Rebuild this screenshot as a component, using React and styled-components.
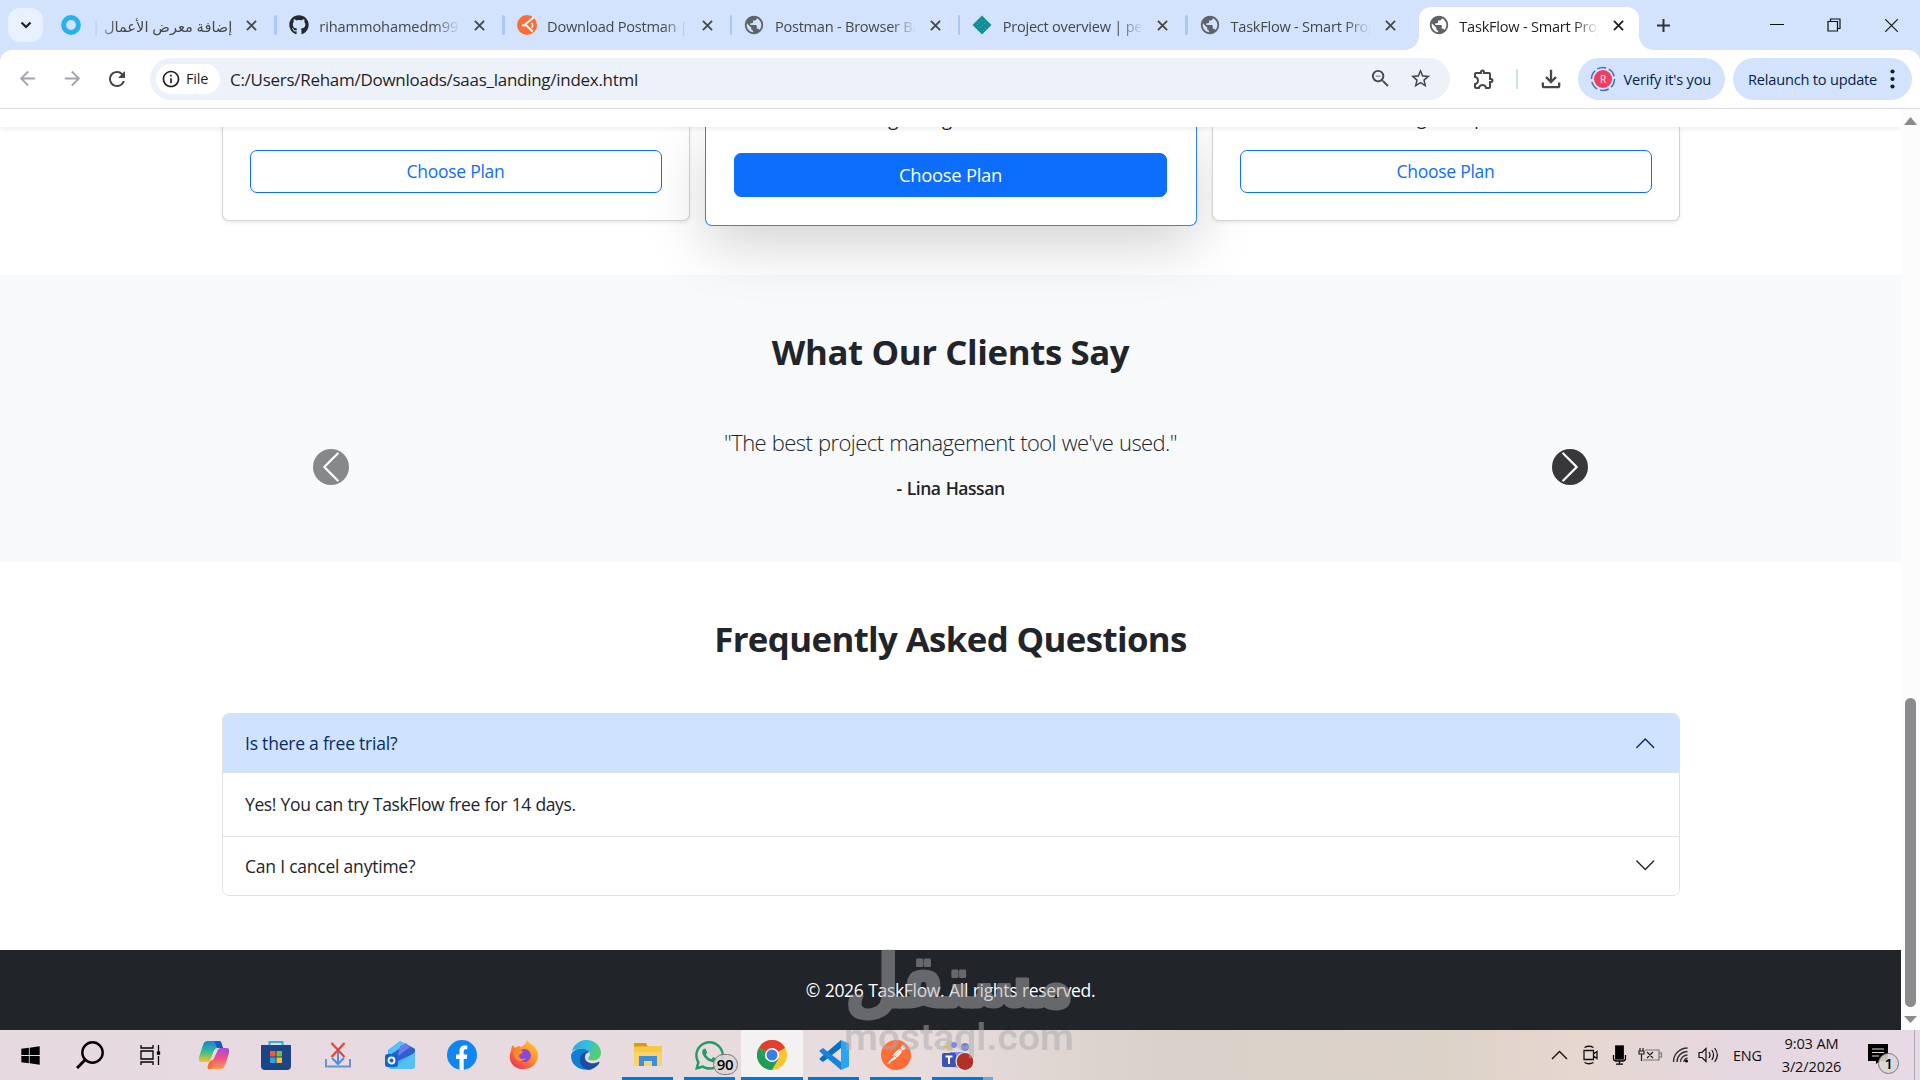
import styled, { createGlobalStyle, css } from "styled-components";
import { FaGithub, FaWindows, FaWhatsapp } from "react-icons/fa";
import { SiPostman } from "react-icons/si";
import {
  MdArrowBack,
  MdArrowForward,
  MdInfoOutline,
  MdOutlineExtension,
  MdOutlineFileDownload,
  MdPublic,
  MdRefresh,
  MdStarOutline,
  MdZoomOut,
} from "react-icons/md";

const GlobalStyle = createGlobalStyle`
  * {
    box-sizing: border-box;
  }

  body {
    margin: 0;
    overflow: hidden;
    font-family: "Open Sans", "Noto Sans", "DejaVu Sans", sans-serif;
    color: #212529;
  }

  svg {
    display: block;
    flex-shrink: 0;
  }

  h2, p {
    margin: 0;
  }
`;

const Screen = styled.div`
  position: relative;
  width: 1920px;
  height: 1080px;
  display: flex;
  flex-direction: column;
  overflow: hidden;
  background-color: #fff;
`;

/* ---------- tab strip ---------- */

const TabStrip = styled.div`
  height: 50px;
  display: flex;
  align-items: center;
  padding-left: 8px;
  background-color: #d3e3fd;
`;

const TabSearch = styled.button`
  width: 35px;
  height: 34px;
  margin-right: 5px;
  display: flex;
  align-items: center;
  justify-content: center;
  padding: 0;
  border: none;
  border-radius: 12px;
  background-color: #e9f1fe;
`;

const TabItem = styled.div`
  position: relative;
  width: 227.8px;
  height: 43px;
  margin-top: 7px;
  padding: 0 18.5px 7px 13px;
  display: flex;
  align-items: center;
  border-radius: 12px 12px 0 0;
  color: #474747;

  ${(props) =>
    props.$active &&
    css`
      width: 220px;
      margin-left: 4px;
      padding-left: 10px;
      padding-right: 14.5px;
      background-color: #fff;
      color: #1f1f1f;

      &::before,
      &::after {
        content: "";
        position: absolute;
        bottom: 0;
        width: 14px;
        height: 14px;
      }
      &::before {
        left: -14px;
        background: radial-gradient(circle at 0 0, transparent 13.5px, #fff 14px);
      }
      &::after {
        right: -14px;
        background: radial-gradient(
          circle at 100% 0,
          transparent 13.5px,
          #fff 14px
        );
      }
    `}
`;

const TabFavicon = styled.span`
  width: 20px;
  height: 20px;
  display: flex;
  align-items: center;
  justify-content: center;
  color: #5f6368;
`;

const TabTitle = styled.span`
  flex: 1;
  margin: 0 14px 0 10.5px;
  padding-top: 1.5px;
  overflow: hidden;
  white-space: nowrap;
  font-size: 14.6px;
  letter-spacing: ${(props) => props.$track || "-0.25px"};
  line-height: 24px;
  direction: ${(props) => (props.$rtl ? "rtl" : "ltr")};
  mask-image: linear-gradient(
    to ${(props) => (props.$rtl ? "left" : "right")},
    #000 82%,
    transparent
  );
`;

const TabDivider = styled.span`
  position: absolute;
  right: -1px;
  top: 8px;
  width: 2.5px;
  height: 20px;
  border-radius: 2px;
  background-color: #a8c7fa;
`;

const NewTab = styled.span`
  margin: 0 auto 0 18px;
`;

const WindowButtons = styled.div`
  display: flex;
  gap: 43px;
  padding-right: 21px;
`;

/* ---------- toolbar ---------- */

const ToolbarBack = styled.div`
  height: 59px;
  background-color: #d3e3fd;
`;

const Toolbar = styled.div`
  height: 59px;
  display: flex;
  align-items: center;
  padding: 0 8px 1px 16px;
  border-bottom: 1px solid #dadce0;
  border-radius: 12px 12px 0 0;
  background-color: #fff;
  color: #474747;
`;

const NavIcons = styled.div`
  width: 134px;
  display: flex;
  gap: 21.5px;

  svg:nth-child(-n + 2) {
    color: #a3a6ad;
  }
`;

const AddressBar = styled.div`
  width: 1300px;
  height: 42px;
  display: flex;
  align-items: center;
  padding: 0 18px 0 6px;
  border-radius: 21px;
  background-color: #edf2fa;
`;

const FileChip = styled.div`
  width: 64px;
  height: 30px;
  display: flex;
  align-items: center;
  gap: 5px;
  padding-left: 5px;
  border-radius: 15px;
  background-color: #fff;
  font-size: 14.5px;
  font-weight: 500;
  letter-spacing: -0.2px;
  color: #1f1f1f;
`;

const Url = styled.span`
  flex: 1;
  margin-left: 10px;
  padding-top: 1px;
  font-size: 17px;
  letter-spacing: -0.277px;
  color: #1f1f1f;
`;

const AddressActions = styled.div`
  display: flex;
  gap: 17px;
`;

const ToolbarActions = styled.div`
  flex: 1;
  display: flex;
  align-items: center;
  justify-content: space-between;
  padding: 0 13.5px 0 22px;
`;

const ToolbarDivider = styled.span`
  width: 2px;
  height: 20px;
  margin-left: 2px;
  background-color: #c9ddfc;
`;

const Chip = styled.div`
  width: ${(props) => props.$width}px;
  height: 42px;
  display: flex;
  align-items: center;
  justify-content: space-between;
  padding: 0 ${(props) => props.$padRight}px 0 ${(props) => props.$padLeft}px;
  margin-left: ${(props) => props.$gap || 0}px;
  border-radius: 21px;
  background-color: #d3e3fd;
  font-size: 14.6px;
  letter-spacing: -0.2px;
  white-space: nowrap;
  color: #041e49;
`;

/* ---------- page ---------- */

const BrowserView = styled.div`
  height: 921px;
  display: flex;
`;

const Page = styled.div`
  width: 1901px;
  height: 921px;
  overflow: hidden;
`;

const SiteNav = styled.div`
  position: relative;
  z-index: 3;
  height: 18px;
  background-color: #fff;
  box-shadow: 0 2px 4.5px rgba(0, 0, 0, 0.075);
`;

const Pricing = styled.section`
  position: relative;
  z-index: 2;
  height: 148px;
  display: flex;
  align-items: flex-start;
  justify-content: center;
  gap: 15px;
`;

const PlanCard = styled.div`
  position: relative;
  width: ${(props) => (props.$featured ? 492 : 468)}px;
  height: ${(props) => (props.$featured ? 99 : 94)}px;
  padding: 0 ${(props) => (props.$featured ? 28.5 : 27)}px;
  border: 1px solid
    ${(props) => (props.$featured ? "#2f81f7" : "rgba(0, 0, 0, 0.175)")};
  border-top: none;
  border-radius: 0 0 7px 7px;
  background-color: #fff;
  box-shadow: ${(props) =>
    props.$featured
      ? "0 19px 57px rgba(0, 0, 0, 0.175)"
      : "0 2px 4.5px rgba(0, 0, 0, 0.075)"};
  text-align: center;
  font-size: ${(props) => (props.$featured ? 18.4 : 17.5)}px;
  letter-spacing: -0.26px;
`;

const PlanFeature = styled.p`
  margin: -22px 0 ${(props) => (props.$featured ? 19.5 : 18)}px;
  line-height: ${(props) => (props.$featured ? 28.3 : 27)}px;
`;

const PlanButton = styled.button`
  width: 100%;
  height: ${(props) => (props.$featured ? 44.5 : 43)}px;
  padding: 0 0 1px;
  border: 1px solid #0d6efd;
  border-radius: 7px;
  background-color: ${(props) => (props.$featured ? "#0d6efd" : "transparent")};
  color: ${(props) => (props.$featured ? "#fff" : "#0d6efd")};
  font: inherit;
  letter-spacing: inherit;
`;

const SectionTitle = styled.h2`
  font-size: 34.8px;
  font-weight: 700;
  line-height: 43px;
  letter-spacing: ${(props) => props.$track};
  text-align: center;
`;

const Testimonials = styled.section`
  height: 287px;
  padding-top: 55px;
  background-color: #f8f9fa;
`;

const Carousel = styled.div`
  margin: 51px auto 0;
  width: 1275px;
  height: 85px;
  display: flex;
  align-items: center;
  justify-content: space-between;
`;

const CarouselArrow = styled.span`
  width: 36px;
  height: 36px;
  border-radius: 50%;
  background-color: ${(props) => (props.$dim ? "#878889" : "#38383c")};
  color: #fff;
`;

const Quote = styled.div`
  align-self: flex-start;
  padding-top: 1px;
  text-align: center;
`;

const QuoteText = styled.p`
  font-size: 22px;
  font-weight: 300;
  line-height: 34px;
  letter-spacing: -0.58px;
  word-spacing: 0.6px;
`;

const QuoteAuthor = styled.p`
  margin-top: 18px;
  font-size: 17.5px;
  font-weight: 600;
  line-height: 22px;
  letter-spacing: -0.45px;
  word-spacing: 1px;
`;

const Faq = styled.section`
  height: 388px;
  padding-top: 55px;
`;

const Accordion = styled.div`
  width: 1458px;
  margin: 53px auto 0;
  border: 1px solid #dee2e6;
  border-radius: 7px;
  overflow: hidden;
  font-size: 17.5px;
`;

const AccordionHeader = styled.div`
  height: ${(props) => (props.$open ? 59 : 58)}px;
  display: flex;
  align-items: center;
  justify-content: space-between;
  padding: 0 22px ${(props) => (props.$open ? 0 : 1)}px 22.5px;
  border-bottom: ${(props) => (props.$open ? "1px solid #dee2e6" : "none")};
  background-color: ${(props) => (props.$open ? "#cfe2ff" : "#fff")};
  color: ${(props) => (props.$open ? "#052c65" : "#212529")};
  letter-spacing: -0.22px;

  svg {
    transform: ${(props) => (props.$open ? "rotate(180deg)" : "none")};
  }
`;

const AccordionBody = styled.div`
  height: 64px;
  padding: 18px 22.5px;
  line-height: 27px;
  border-bottom: 1px solid #dee2e6;
  letter-spacing: -0.4px;
  word-spacing: 0.5px;
`;

const Footer = styled.footer`
  height: 80px;
  padding-top: 27px;
  background-color: #212529;
  color: #fff;
  text-align: center;
  font-size: 17.5px;
  line-height: 27px;
  letter-spacing: -0.32px;
  word-spacing: 0.5px;
`;

const Scrollbar = styled.div`
  width: 19px;
  height: 921px;
  display: flex;
  flex-direction: column;
  align-items: center;
  justify-content: space-between;
  padding: 8px 0 7px;
  background-color: #fcfcfc;
`;

const ScrollThumb = styled.div`
  width: 11px;
  height: 309px;
  margin: auto 0 9px;
  border-radius: 6px;
  background-color: #8b8b8d;
`;

const Watermark = styled.svg`
  position: absolute;
  left: 835px;
  top: 940px;
  pointer-events: none;
`;

/* ---------- taskbar ---------- */

const TaskbarRoot = styled.div`
  height: 50px;
  display: flex;
  background: linear-gradient(
    90deg,
    #e6dae0 0%,
    #e7dbe0 30%,
    #e8dcdc 48%,
    #d9d1ca 60%,
    #dcd2c8 75%,
    #e6d7cf 82%,
    #e5d7df 90%,
    #e7dae5 100%
  );
`;

const TaskSystem = styled.div`
  width: 182.5px;
  display: flex;
`;

const TaskCell = styled.div`
  position: relative;
  width: ${(props) => (props.$system ? 60 : 62)}px;
  height: 50px;
  display: flex;
  align-items: center;
  justify-content: center;
  background-color: ${(props) => (props.$active ? "#f4f1f2" : "transparent")};

  &::after {
    content: "";
    display: ${(props) => (props.$running ? "block" : "none")};
    position: absolute;
    bottom: 0;
    left: ${(props) => (props.$active ? 0 : 5.5)}px;
    right: ${(props) => (props.$active ? 0 : 5.5)}px;
    height: 3px;
    background-color: #0078d7;
    box-shadow: ${(props) => (props.$stacked ? "10px 0 0 #6aa9dc" : "none")};
  }
`;

const CountBadge = styled.span`
  position: absolute;
  left: ${(props) => props.$x}px;
  top: ${(props) => props.$y}px;
  width: ${(props) => props.$size}px;
  height: 21px;
  border: 1px solid #77787a;
  border-radius: 12px;
  background-color: rgba(216, 214, 214, 0.9);
  font-size: 15px;
  font-weight: 600;
  line-height: 19px;
  letter-spacing: -0.4px;
  text-align: center;
  color: #000;
`;

const Tray = styled.div`
  margin-left: auto;
  display: flex;
  align-items: center;
  color: #111;
`;

const TrayIcons = styled.div`
  display: flex;
  align-items: center;
  gap: 8.3px;
  margin-right: 14px;
`;

const Language = styled.span`
  width: 29px;
  font-size: 14.4px;
  letter-spacing: -0.15px;
`;

const Clock = styled.div`
  width: 64px;
  margin: 0 24.5px 1px 17.5px;
  text-align: center;
  font-size: 14.6px;
  line-height: 22.6px;
  letter-spacing: -0.15px;
`;

const Notifications = styled.div`
  position: relative;
  width: 20px;
  height: 20px;
  margin: 0 26px 2px 0;
`;

const ShowDesktop = styled.span`
  width: 6px;
  height: 50px;
  border-left: 1px solid #a9abb8;
`;

const Close = ({ size = 11, weight = 2 }) => (
  <svg width={size} height={size} viewBox="0 0 12 12">
    <path d="M1 1l10 10M11 1L1 11" stroke="currentColor" strokeWidth={weight} />
  </svg>
);

const Chevron = ({ size = 22.5 }) => (
  <svg width={size} height={size} viewBox="0 0 16 16" fill="currentColor">
    <path d="M1.646 4.646a.5.5 0 0 1 .708 0L8 10.293l5.646-5.647a.5.5 0 0 1 .708.708l-6 6a.5.5 0 0 1-.708 0l-6-6a.5.5 0 0 1 0-.708z" />
  </svg>
);

const CarouselChevron = ({ flip }) => (
  <svg width="36" height="36" viewBox="0 0 16 16" fill="currentColor">
    <path
      transform={flip ? "matrix(-1 0 0 1 16 0)" : undefined}
      d="M4.646 1.646a.5.5 0 0 1 .708 0l6 6a.5.5 0 0 1 0 .708l-6 6a.5.5 0 0 1-.708-.708L10.293 8 4.646 2.354a.5.5 0 0 1 0-.708z"
    />
  </svg>
);

const RingIcon = () => (
  <svg width="20" height="22" viewBox="0 0 20 22">
    <circle cx="10" cy="11" r="7.4" fill="none" stroke="#27b2ee" strokeWidth="5" />
  </svg>
);

const PostmanTabIcon = () => (
  <svg width="20" height="20" viewBox="0 0 20 20">
    <circle cx="10" cy="10" r="10" fill="#ff6c37" />
    <path
      d="M16.500 2.500L8 9.500M4.500 10.500L9 10l6.500 6.500"
      fill="none"
      stroke="#fff"
      strokeWidth="1.8"
    />
    <path
      d="M14.500 8q2.500 2.500 0 5"
      fill="none"
      stroke="#fff"
      strokeWidth="1.4"
    />
  </svg>
);

const DiamondIcon = () => (
  <svg width="20" height="20" viewBox="0 0 20 20">
    <path d="M10 .5L19.500 10 10 19.500.5 10z" fill="#128f94" />
    <path
      d="M5 10l5-5m-2 8l5-5m-2 8l4-4"
      stroke="#3cc3b4"
      strokeWidth="1"
      strokeDasharray="1 2"
    />
  </svg>
);

const tabs = [
  { title: "إضافة معرض الأعمال | مستقل", icon: <RingIcon />, rtl: true, track: "0" },
  {
    title: "rihammohamedm991/Task",
    icon: <FaGithub size={20} color="#24292f" />,
    track: "-0.1px",
  },
  { title: "Download Postman | Get", icon: <PostmanTabIcon /> },
  { title: "Postman - Browser Based", icon: <MdPublic size={22} /> },
  { title: "Project overview | penguin", icon: <DiamondIcon /> },
  { title: "TaskFlow - Smart Project", icon: <MdPublic size={22} /> },
  { title: "TaskFlow - Smart Project", icon: <MdPublic size={22} />, active: true },
];

const TabBar = () => (
  <TabStrip>
    <TabSearch>
      <svg width="12" height="8" viewBox="0 0 12 8">
        <path d="M1.500 1.500L6 6l4.500-4.500" fill="none" stroke="#1f1f1f" strokeWidth="2.2" />
      </svg>
    </TabSearch>
    {tabs.map((tab, i) => (
      <TabItem key={i} $active={tab.active}>
        <TabFavicon>{tab.icon}</TabFavicon>
        <TabTitle $rtl={tab.rtl} $track={tab.track}>
          {tab.title}
        </TabTitle>
        <Close />
        {i < 5 && <TabDivider />}
      </TabItem>
    ))}
    <NewTab>
      <svg width="13" height="13" viewBox="0 0 13 13">
        <path d="M6.500 0v13M0 6.500h13" stroke="#333" strokeWidth="2" />
      </svg>
    </NewTab>
    <WindowButtons>
      <svg width="14" height="14" viewBox="0 0 14 14">
        <path d="M0 6.500h14" stroke="#111" strokeWidth="1" />
      </svg>
      <svg width="14" height="14" viewBox="0 0 14 14" fill="none" stroke="#111" strokeWidth="1.2">
        <path d="M1 3.500h9.500V13H1zM3.500 3.500V1H13v9.500h-2.500" />
      </svg>
      <Close size={15} weight={0.9} />
    </WindowButtons>
  </TabStrip>
);

const AddressToolbar = () => (
  <ToolbarBack>
    <Toolbar>
      <NavIcons>
        <MdArrowBack size={23} />
        <MdArrowForward size={23} />
        <MdRefresh size={24} />
      </NavIcons>
      <AddressBar>
        <FileChip>
          <MdInfoOutline size={20} />
          File
        </FileChip>
        <Url>C:/Users/Reham/Downloads/saas_landing/index.html</Url>
        <AddressActions>
          <MdZoomOut size={23} />
          <MdStarOutline size={23} />
        </AddressActions>
      </AddressBar>
      <ToolbarActions>
        <MdOutlineExtension size={24} />
        <ToolbarDivider />
        <MdOutlineFileDownload size={28} />
      </ToolbarActions>
      <Chip $width={147} $padLeft={12} $padRight={14}>
        <svg width="26" height="30" viewBox="0 0 26 30">
          <circle
            cx="13"
            cy="15"
            r="11.500"
            fill="none"
            stroke="#4a6cac"
            strokeWidth="1.5"
            strokeDasharray="9 3"
          />
          <circle cx="13" cy="15" r="9" fill="#ef3e62" />
          <text x="13" y="18.500" textAnchor="middle" fontSize="10" fill="#fff">
            R
          </text>
        </svg>
        Verify it's you
      </Chip>
      <Chip $width={179} $padLeft={15} $padRight={17} $gap={8}>
        Relaunch to update
        <svg width="5" height="20" viewBox="0 0 5 20" fill="#041e49">
          <circle cx="2.500" cy="2.500" r="2.100" />
          <circle cx="2.500" cy="10" r="2.100" />
          <circle cx="2.500" cy="17.500" r="2.100" />
        </svg>
      </Chip>
    </Toolbar>
  </ToolbarBack>
);

const LandingPage = () => (
  <Page>
    <SiteNav />
    <Pricing>
      <PlanCard>
        <PlanFeature>Email alerts</PlanFeature>
        <PlanButton>Choose Plan</PlanButton>
      </PlanCard>
      <PlanCard $featured>
        <PlanFeature $featured>Storage usage dashboard</PlanFeature>
        <PlanButton $featured>Choose Plan</PlanButton>
      </PlanCard>
      <PlanCard>
        <PlanFeature>Storage + imports</PlanFeature>
        <PlanButton>Choose Plan</PlanButton>
      </PlanCard>
    </Pricing>

    <Testimonials>
      <SectionTitle $track="-0.39px">What Our Clients Say</SectionTitle>
      <Carousel>
        <CarouselArrow $dim>
          <CarouselChevron flip />
        </CarouselArrow>
        <Quote>
          <QuoteText>"The best project management tool we've used."</QuoteText>
          <QuoteAuthor>- Lina Hassan</QuoteAuthor>
        </Quote>
        <CarouselArrow>
          <CarouselChevron />
        </CarouselArrow>
      </Carousel>
    </Testimonials>

    <Faq>
      <SectionTitle $track="-0.62px">Frequently Asked Questions</SectionTitle>
      <Accordion>
        <AccordionHeader $open>
          Is there a free trial?
          <Chevron />
        </AccordionHeader>
        <AccordionBody>Yes! You can try TaskFlow free for 14 days.</AccordionBody>
        <AccordionHeader>
          Can I cancel anytime?
          <Chevron />
        </AccordionHeader>
      </Accordion>
    </Faq>

    <Footer>© 2026 TaskFlow. All rights reserved.</Footer>
  </Page>
);

const CopilotIcon = () => (
  <svg width="30" height="28" viewBox="0 0 30 28">
    <defs>
      <linearGradient id="copA" x1="0" y1="0" x2="0" y2="1">
        <stop offset="0" stopColor="#1b7fe0" />
        <stop offset=".5" stopColor="#2fbf8a" />
        <stop offset="1" stopColor="#ffc324" />
      </linearGradient>
      <linearGradient id="copB" x1="0" y1="0" x2="0" y2="1">
        <stop offset="0" stopColor="#a24ddb" />
        <stop offset=".5" stopColor="#ee5087" />
        <stop offset="1" stopColor="#ff9b45" />
      </linearGradient>
    </defs>
    <path d="M9 0h11c2 0 2.500 2 3 4l1 3h-5c-3 0-4 2-5 5l-2 5c-1 3-2 4-5 4H3c-3 0-4-2-3-5l4-12c1-3 2-4 5-4z" fill="url(#copA)" />
    <path d="M21 28H10c-2 0-1.500-3 0-6l1-2c3 0 4-2 5-5l2-4c1-3 2-4 4-4h5c3 0 4 2 3 5l-4 12c-1 3-2 4-5 4z" fill="url(#copB)" />
    <path d="M15 0h5c2 0 2.500 2 3 4l1 3h-5c-2 0-3-7-4-7z" fill="#1758c4" />
    <path d="M10 28c-2 0-1.500-3 0-6l1-2c2-.5 3-1 4-2l-2 8c-.5 1-1 2-3 2z" fill="#ff6a3a" />
  </svg>
);

const StoreIcon = () => (
  <svg width="30" height="30" viewBox="0 0 30 30">
    <path d="M8.500 8V2h13v6" fill="none" stroke="#2bb0ee" strokeWidth="2" />
    <path d="M0 5h30v21q0 4-4 4H4q-4 0-4-4z" fill="#1d4585" />
    <path d="M9 11h5.500v5.500H9z" fill="#f25a34" />
    <path d="M15.500 11H21v5.500h-5.500z" fill="#7fb83c" />
    <path d="M9 17.500h5.500V23H9z" fill="#25a7ef" />
    <path d="M15.500 17.500H21V23h-5.500z" fill="#fec02e" />
  </svg>
);

const DownloadManagerIcon = () => (
  <svg width="26" height="26" viewBox="0 0 26 26" fill="none">
    <path d="M1 17v7.500h24V17" stroke="#6a93cc" strokeWidth="2" />
    <path d="M13 10v12m-6-6l6 6 6-6" stroke="#4a8fe6" strokeWidth="2" />
    <path d="M6.500 1l13 14m0-14l-13 14" stroke="#e8423e" strokeWidth="2.2" />
  </svg>
);

const OutlookIcon = () => (
  <svg width="30" height="28" viewBox="0 0 30 28">
    <path d="M3 9L15 0l15 8v16q0 4-4 4H7q-4 0-4-4z" fill="#3fb8f3" />
    <path d="M3 10L15 0l6 3-14 10z" fill="#54c3f6" />
    <path d="M21 3l9 5v4L13 20 5 14z" fill="#2f5fd0" />
    <path d="M15 5l6-3 4 4-12 9z" fill="#6a7bf0" />
    <path d="M30 11v13q0 4-4 4H9z" fill="#56bff5" />
    <rect y="13" width="13" height="13" rx="2.500" fill="#1268c4" />
    <circle cx="6.500" cy="19.500" r="3" fill="none" stroke="#fff" strokeWidth="1.8" />
  </svg>
);

const FacebookIcon = () => (
  <svg width="30" height="30" viewBox="0 0 30 30">
    <circle cx="15" cy="15" r="15" fill="#0f86f2" />
    <path d="M12.500 30V19H9v-4.500h3.500V11c0-3.700 2-5.500 5.300-5.500 1.300 0 2.500.2 2.500.2v3.600h-1.600c-1.700 0-2 1-2 2v3.200h3.600L19.700 19h-3V30z" fill="#fff" />
  </svg>
);

const FirefoxIcon = () => (
  <svg width="30" height="30" viewBox="0 0 30 30">
    <defs>
      <linearGradient id="ff" x1="1" y1="0" x2=".2" y2="1">
        <stop offset="0" stopColor="#ffd53a" />
        <stop offset=".5" stopColor="#ff8f2b" />
        <stop offset="1" stopColor="#ea2f5c" />
      </linearGradient>
    </defs>
    <path d="M18 0c2 3 5 4 8 7 4 5 4 12 0 17-5 6-15 7-21 2C0 22 0 15 2 11c0-3 1-5 2-6l2 3c1-1 2-2 4-2l2 1c2-1 5-3 6-7z" fill="url(#ff)" />
    <circle cx="15.500" cy="15.500" r="6.500" fill="#8b48d6" />
    <path d="M5 11c3-2 6-2 9 1-1 2-4 2-4 4 0 3 4 4 7 2-2 4-9 4-11 0-1-2-2-5-1-7z" fill="#ff8a2c" />
  </svg>
);

const EdgeIcon = () => (
  <svg width="30" height="30" viewBox="0 0 30 30">
    <defs>
      <linearGradient id="edge" x1="0" y1="0" x2="1" y2=".3">
        <stop offset="0" stopColor="#2aa9e0" />
        <stop offset=".55" stopColor="#35bde2" />
        <stop offset="1" stopColor="#57cf6b" />
      </linearGradient>
    </defs>
    <path d="M1 11C3 4 9 0 15 0c9 0 15 6 15 13 0 5-4 7.500-8 7.500-3 0-5-1-5-2s2-2 2-4c0-3-3-6-8-6-5 0-9 2-10 2.500z" fill="url(#edge)" />
    <path d="M0 16C0 12 5 8.500 11 8.500c3 0 6 1 7.500 4C14 11 11 15 11 19c0 6 5 10 10 10C12 32 0 27 0 16z" fill="#0f7fd6" />
    <path d="M18 12c-4-1-9 2-9 8 0 5 4 9.500 9 9.800 5-.8 9-4 10.500-7.300.3-1-.5-1-1-.7C22 25 13 23 14 16c.5-2 2-3.500 4-4z" fill="#1a4f9f" />
  </svg>
);

const ExplorerIcon = () => (
  <svg width="28" height="24" viewBox="0 0 28 24">
    <path d="M0 0h12l2 3h14v20H0z" fill="#f9c846" />
    <path d="M0 0h12l1.500 3.500H0z" fill="#d99a1c" />
    <path d="M0 9h28v14H0z" fill="#fbd469" />
    <path d="M5 23v-10h18v10h-5v-5h-8v5z" fill="#3b8ee0" />
  </svg>
);

const ChromeIcon = () => (
  <svg width="30" height="30" viewBox="0 0 30 30">
    <circle cx="15" cy="15" r="15" fill="#fbc430" />
    <path d="M15 15L2 7.500A15 15 0 0 1 28 7.500z" fill="#e2402f" />
    <path d="M2 7.500A15 15 0 0 0 15 30l6.500-11.200L15 15l-6.500 3.700z" fill="#1f9d58" />
    <path d="M8.500 18.700L2 7.500 15 15z" fill="#1f9d58" />
    <path d="M15 8h13L15 15z" fill="#e2402f" />
    <circle cx="15" cy="15" r="7" fill="#fff" />
    <circle cx="15" cy="15" r="5.500" fill="#3b7de8" />
  </svg>
);

const VsCodeIcon = () => (
  <svg width="30" height="30" viewBox="0 0 30 30">
    <path d="M22 0l8 3.500v23L22 30z" fill="#2aa5ef" />
    <path d="M22 0v8L4 22l-3.500-2.500L1 18z" fill="#0b6fc0" />
    <path d="M22 30v-8L4 8 .5 10.500 1 12z" fill="#1684d8" />
  </svg>
);

const PostmanRoot = styled.span`
  display: flex;
  border-radius: 50%;
  background: radial-gradient(circle, #fff 60%, transparent 62%);
`;

const TeamsIcon = () => (
  <svg width="34" height="32" viewBox="0 0 34 32">
    <circle cx="8" cy="7" r="5.500" fill="#e3cda6" />
    <circle cx="13" cy="6" r="3" fill="#7d87e6" />
    <circle cx="24" cy="8" r="4" fill="#6d84dc" />
    <path d="M9 13h16v13q-8 6-16 0z" fill="#7f90ea" />
    <rect x="1" y="14" width="14" height="14" rx="2" fill="#3a54b4" />
    <path d="M4.500 17.500h7M8 17.500V25" stroke="#fff" strokeWidth="2" />
    <circle cx="24" cy="22.500" r="9" fill="#b23127" stroke="#f0eaea" strokeWidth="1.200" />
  </svg>
);

const apps = [
  { icon: <CopilotIcon /> },
  { icon: <StoreIcon /> },
  { icon: <DownloadManagerIcon /> },
  { icon: <OutlookIcon /> },
  { icon: <FacebookIcon /> },
  { icon: <FirefoxIcon /> },
  { icon: <EdgeIcon /> },
  { icon: <ExplorerIcon />, running: true },
  { icon: <FaWhatsapp size={33} color="#1f9d62" />, running: true, count: "90" },
  { icon: <ChromeIcon />, running: true, active: true },
  { icon: <VsCodeIcon />, running: true },
  {
    icon: (
      <PostmanRoot>
        <SiPostman size={30} color="#ff6c37" />
      </PostmanRoot>
    ),
    running: true,
  },
  { icon: <TeamsIcon />, running: true, stacked: true },
];

const Taskbar = () => (
  <TaskbarRoot>
    <TaskSystem>
      <TaskCell $system>
        <FaWindows size={21} color="#000" />
      </TaskCell>
      <TaskCell $system>
        <svg width="28" height="28" viewBox="0 0 28 28" fill="none" stroke="#000">
          <circle cx="16.500" cy="11.500" r="10.200" strokeWidth="2.400" />
          <path d="M9 19l-8 8" strokeWidth="3" />
        </svg>
      </TaskCell>
      <TaskCell $system>
        <svg width="21" height="20" viewBox="0 0 21 20" fill="none" stroke="#000" strokeWidth="1.300">
          <path d="M1 0v3h12V0M1 6h12v8H1zM1 20v-3h12v3M18.500 0v6M18.500 11v9" />
          <path d="M17.500 7h2v2h-2z" fill="#000" />
        </svg>
      </TaskCell>
    </TaskSystem>
    {apps.map((app, i) => (
      <TaskCell
        key={i}
        $running={app.running}
        $active={app.active}
        $stacked={app.stacked}
      >
        {app.icon}
        {app.count && (
          <CountBadge $x={34} $y={24} $size={25}>
            {app.count}
          </CountBadge>
        )}
      </TaskCell>
    ))}

    <Tray>
      <TrayIcons>
        <svg width="17" height="10" viewBox="0 0 17 10">
          <path d="M1 9l7.500-7.500L16 9" fill="none" stroke="#111" strokeWidth="1.400" />
        </svg>
        <svg width="28" height="20" viewBox="1 0 28 20" fill="none" stroke="#111" strokeWidth="1.300">
          <path d="M9 5.500h9.500v9H9zM18.500 9l3.500-2.500v7L18.500 11M9.500 2.500q4.500-2.500 9 0M9.500 17.500q4.500 2.500 9 0" />
        </svg>
        <svg width="15" height="20" viewBox="0 0 15 20" fill="none" stroke="#000" strokeWidth="1.300">
          <rect x="3.800" y="1" width="7.400" height="13" fill="#000" />
          <path d="M1.500 10v3.500q0 2.500 3 2.500h6q3 0 3-2.500V10M7.500 16v3M4 19.200h7" />
        </svg>
        <svg width="28" height="14" viewBox="0 0 28 14" fill="none" stroke="#222" strokeWidth="1.200">
          <path d="M10 2h14v10H8M24.500 5h2v4h-2" stroke="#777" />
          <path d="M5 0v3M8 0v3M4 3h5v3H4zM6.500 6v7M12 4l6 6M18 4l-6 6" />
        </svg>
        <svg width="18" height="18" viewBox="0 0 18 18" fill="none" stroke="#333" strokeWidth="1.400">
          <path d="M1.500 16A14 14 0 0 1 15.500 2M5 16A10.500 10.500 0 0 1 15.500 5.500M8.500 16a7 7 0 0 1 7-7M11.800 16a3.700 3.700 0 0 1 3.700-3.700" />
          <circle cx="14.500" cy="15" r="1.500" fill="#000" stroke="none" />
        </svg>
        <svg width="21" height="18" viewBox="0 0 21 18" fill="none" stroke="#111" strokeWidth="1.200">
          <path d="M1 6.500h3L8 2.500v13l-4-4H1zM11 6q2 3 0 6M13.800 4q3.500 5 0 10M16.600 2q5.500 7 0 14" />
        </svg>
      </TrayIcons>
      <Language>ENG</Language>
      <Clock>
        <div>9:03 AM</div>
        <div>3/2/2026</div>
      </Clock>
      <Notifications>
        <svg width="20" height="20" viewBox="0 0 20 20">
          <path d="M0 0h20v17h-8l-4 3v-3H0z" fill="#000" />
          <path d="M4 5h12M4 8.500h12M4 12h7" stroke="#e7dae0" strokeWidth="1.200" />
        </svg>
        <CountBadge $x={10} $y={9} $size={21}>
          1
        </CountBadge>
      </Notifications>
      <ShowDesktop />
    </Tray>
  </TaskbarRoot>
);

function App() {
  return (
    <>
      <GlobalStyle />
      <Screen>
        <TabBar />
        <AddressToolbar />
        <BrowserView>
          <LandingPage />
          <Scrollbar>
            <svg width="13" height="8" viewBox="0 0 13 8">
              <path d="M6.500 0L13 8H0z" fill="#8b8b8d" />
            </svg>
            <ScrollThumb />
            <svg width="13" height="7" viewBox="0 0 13 7">
              <path d="M0 0h13L6.500 7z" fill="#8b8b8d" />
            </svg>
          </Scrollbar>
        </BrowserView>
        <Taskbar />
        <Watermark width="250" height="125" viewBox="0 0 250 125">
          <g fill="#aaaaae" opacity="0.5">
            <text
              x="124.500"
              y="67"
              textAnchor="middle"
              textLength="229"
              lengthAdjust="spacingAndGlyphs"
              fontFamily="DejaVu Sans"
              fontWeight="700"
              fontSize="74"
              stroke="#aaaaae"
              strokeWidth="3"
              strokeLinejoin="round"
            >
              مستقل
            </text>
            <text
              x="9"
              y="110"
              textLength="230"
              lengthAdjust="spacingAndGlyphs"
              fontFamily="Roboto, sans-serif"
              fontWeight="600"
              fontSize="37"
            >
              mostaql.com
            </text>
          </g>
        </Watermark>
      </Screen>
    </>
  );
}

export default App;
